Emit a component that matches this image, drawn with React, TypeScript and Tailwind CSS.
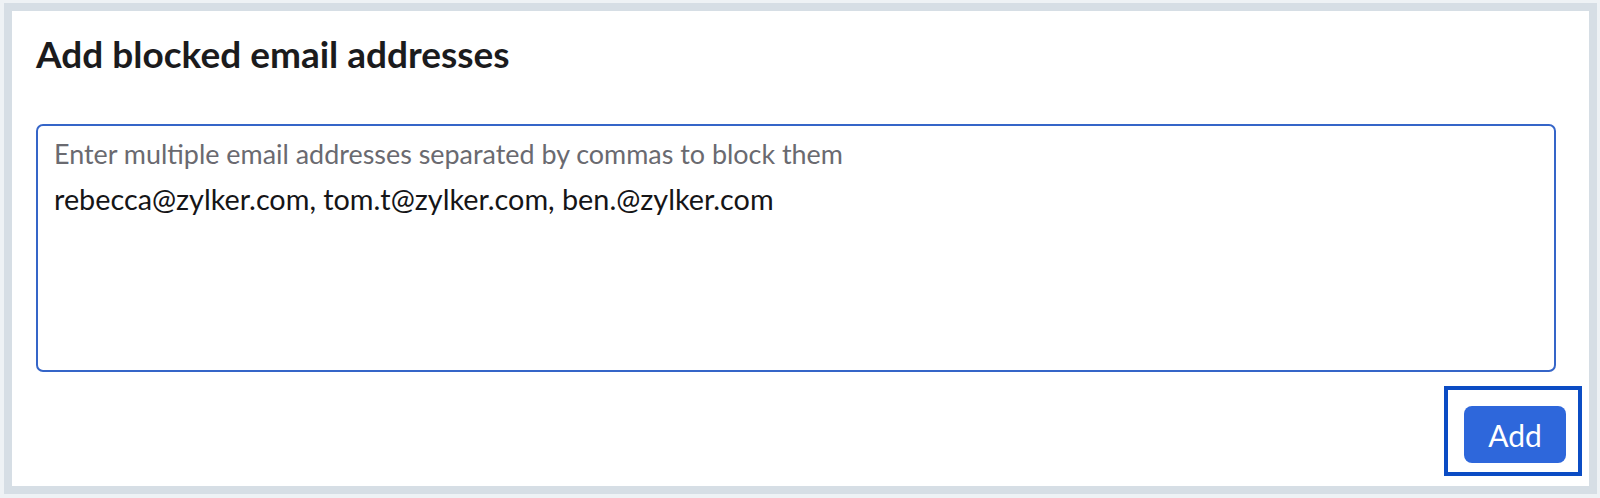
import React from "react";

export default function App() {
  return (
    <div className="w-[1600px] h-[498px] bg-[#eef2f5] pt-[3px] pl-[4px] pr-[3px] pb-[4px] font-['Lato',sans-serif]">
      <div className="h-full border-[8px] border-[#d6dee5] bg-white flex flex-col pl-[24px] pr-[33px]">
        <h1 className="mt-[21px] text-[37px] leading-[44px] font-bold text-[#1b1b1d]">
          Add blocked email addresses
        </h1>
        <div className="mt-[48px] h-[248px] rounded-[7px] border-2 border-[#3565c8] pl-[16px] pt-[12px]">
          <div className="text-[26.9px] leading-[32px] text-[#6a6a70]">
            Enter multiple email addresses separated by commas to block them
          </div>
          <div className="mt-[12px] text-[28.8px] leading-[34px] text-[#151517]">
            rebecca@zylker.com, tom.t@zylker.com, ben.@zylker.com
          </div>
        </div>
        <div className="flex justify-end mt-[14px] mr-[-26px]">
          <div className="border-[4px] border-[#0b4cc4] pt-[16px] pb-[9px] pl-[16px] pr-[12px]">
            <button className="w-[102px] h-[57px] rounded-[8px] bg-[#2e67db] text-white text-[30px] leading-none">
              Add
            </button>
          </div>
        </div>
      </div>
    </div>
  );
}
